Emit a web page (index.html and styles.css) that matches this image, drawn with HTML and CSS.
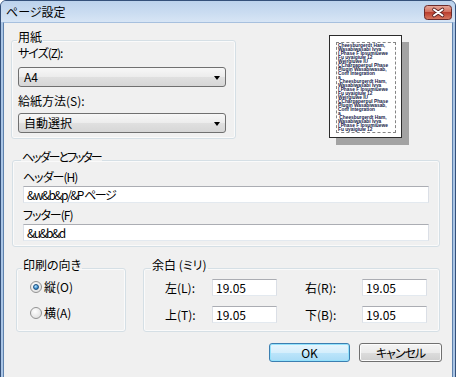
FILE: index.html
```html
<!DOCTYPE html>
<html lang="ja">
<head>
    <meta charset="UTF-8">
    <title>ページ設定</title>
    <link rel="stylesheet" href="styles.css">
</head>
<body>

<div class="window">
    <div class="titlebar">
        <span class="title">ページ設定</span>
        <span class="close">
            <svg width="28" height="15" viewBox="0 0 28 15">
                <defs>
                    <linearGradient id="cg" x1="0" y1="0" x2="0" y2="1">
                        <stop offset="0" stop-color="#e8aa9c"/>
                        <stop offset="0.45" stop-color="#d2705f"/>
                        <stop offset="0.5" stop-color="#bb3f2f"/>
                        <stop offset="1" stop-color="#d87a63"/>
                    </linearGradient>
                </defs>
                <rect x="0.5" y="0.5" width="27" height="14" rx="3" fill="url(#cg)" stroke="#6b2b2b"/>
                <path d="M10 4.5 L18.5 10.5 M18.5 4.5 L10 10.5" stroke="#5a2020" stroke-width="3.6" stroke-linecap="round"/>
                <path d="M10 4.5 L18.5 10.5 M18.5 4.5 L10 10.5" stroke="#ffffff" stroke-width="2" stroke-linecap="round"/>
            </svg>
        </span>
    </div>

    <div class="client">
        <div class="row-top">
            <fieldset class="group paper">
                <legend>用紙</legend>
                <div class="label first narrow">サイズ(Z):</div>
                <div class="combo"><span>A4</span><span class="arrow"></span></div>
                <div class="label second">給紙方法(S):</div>
                <div class="combo combo-source"><span>自動選択</span><span class="arrow"></span></div>
            </fieldset>

            <!-- page preview -->
            <div class="sheet">
                <div class="sheet-margin">
                    Cheesburgerdt Ham,<br>
                    Wasabiwasabi Ivya<br>
                    I Phase F Ipsumiuewe<br>
                    Fu uyaigiuw 12<br>
                    Weirgiuwe IU<br>
                    CCharpaperpul Phase<br>
                    Plugin Wasabiwasab,<br>
                    Conf Integration<br>
                    a<br>
                    &nbsp;Cheesburgerdt Ham,<br>
                    Wasabiwasabi Ivya<br>
                    I Phase F Ipsumiuewe<br>
                    Fu uyaigiuw 12<br>
                    Weirgiuwe IU<br>
                    CCharpaperpul Phase<br>
                    Plugin Wasabiwasab,<br>
                    Conf Integration<br>
                    a<br>
                    &nbsp;Cheesburgerdt Ham,<br>
                    Wasabiwasabi Ivya<br>
                    I Phase F Ipsumiuewe<br>
                    Fu uyaigiuw 12
                </div>
            </div>
        </div>

        <fieldset class="group hf">
            <legend class="kana">ヘッダーとフッター</legend>
            <div class="label hf-label narrow">ヘッダー(H)</div>
            <div class="textbox wide narrower">&amp;w&amp;b&amp;p/&amp;P ページ</div>
            <div class="label hf-label2 narrow">フッター(F)</div>
            <div class="textbox wide wide2 narrower">&amp;u&amp;b&amp;d</div>
        </fieldset>

        <div class="row-bottom">
            <fieldset class="group orient">
                <legend>印刷の向き</legend>
                <div class="radio-row"><span class="radio checked"></span><span>縦(O)</span></div>
                <div class="radio-row row2"><span class="radio"></span><span>横(A)</span></div>
            </fieldset>

            <fieldset class="group margins">
                <legend>余白 (ミリ)</legend>
                <div class="margin-grid">
                    <span class="mlabel">左(L):</span>
                    <div class="textbox small">19.05</div>
                    <span class="mlabel right">右(R):</span>
                    <div class="textbox small">19.05</div>
                    <span class="mlabel">上(T):</span>
                    <div class="textbox small">19.05</div>
                    <span class="mlabel right">下(B):</span>
                    <div class="textbox small">19.05</div>
                </div>
            </fieldset>
        </div>

        <div class="buttons">
            <div class="btn default">OK</div>
            <div class="btn cancel narrow">キャンセル</div>
        </div>
    </div>
</div>

</body>
</html>
```

FILE: styles.css
```css
body {
    margin: 0;
    width: 458px;
    height: 377px;
    overflow: hidden;
    background-color: #ffffff;
    font-family: "Noto Sans CJK JP", "Noto Sans", sans-serif;
    font-size: 12px;
    color: #000;
    font-feature-settings: "palt";
}

.narrow {
    letter-spacing: -1px;
}

.narrower {
    letter-spacing: -1.5px;
}

.window {
    width: 456px;
    height: 382px;
    box-sizing: border-box;
    border: 1px solid #34507a;
    border-radius: 6px 6px 0 0;
    background-color: #aac5e5;
    padding: 0 2px;
    overflow: hidden;
}

.titlebar {
    height: 21px;
    margin: 0 -2px;
    padding: 0 3px 0 5px;
    display: flex;
    align-items: center;
    justify-content: space-between;
    background: linear-gradient(#bcd2ec, #cadcf1 55%, #d7e5f5);
}

.title {
    line-height: 14px;
    margin-top: 1px;
}

.close {
    display: flex;
    margin-top: 1px;
}

.client {
    height: 350px;
    background-color: #f0f0f0;
    border: 1px solid #5f82ad;
    border-top-color: #a7c0de;
    padding-top: 11px;
    box-sizing: content-box;
}

/* group boxes */
.group {
    margin: 0;
    padding: 0 6px;
    min-width: 0;
    box-sizing: border-box;
    border: 1px solid #d5dfe5;
    border-radius: 3px;
    box-shadow: inset 0 0 0 1px #fafafa;
}

.group legend {
    position: relative;
    top: -3px;
    padding: 0 1px;
    margin-left: -1px;
    line-height: 12px;
}

.group legend.kana {
    letter-spacing: -2px;
}

.label {
    line-height: 12px;
}

.row-top {
    display: flex;
    align-items: flex-start;
}

.paper {
    width: 225px;
    margin-left: 7px;
    padding-bottom: 5px;
}

.paper .first {
    margin-top: 1px;
}

.paper .second {
    margin-top: 8px;
}

.combo {
    height: 20px;
    margin-top: 8px;
    width: 208px;
    box-sizing: border-box;
    border: 1px solid #707070;
    border-radius: 3px;
    background: linear-gradient(#f7f7f7, #ececec 50%, #e0e0e0 50%, #d6d6d6);
    display: flex;
    align-items: center;
    justify-content: space-between;
    padding: 0 5px 0 5px;
    line-height: 14px;
}

.combo-source {
    margin-top: 6px;
}

.arrow {
    width: 0;
    height: 0;
    border-top: 4px solid #000;
    border-left: 3.5px solid transparent;
    border-right: 3.5px solid transparent;
    margin-top: 1px;
}

/* page preview */
.sheet {
    width: 73px;
    height: 103px;
    box-sizing: border-box;
    margin-left: 93px;
    margin-top: 1px;
    background-color: #fff;
    border: 1px solid #2b2b2b;
    box-shadow: 7px 7px 0 #a3a3a3;
    padding: 6px 5px 4px 6px;
}

.sheet-margin {
    height: 100%;
    box-sizing: border-box;
    border: 1px dashed #858585;
    padding: 1px 1px 0 1px;
    overflow: hidden;
    white-space: nowrap;
    font-family: "Liberation Sans", sans-serif;
    font-size: 4.8px;
    line-height: 4px;
    font-weight: bold;
    color: #16224a;
    font-feature-settings: normal;
}

/* header and footer */
.hf {
    width: 428px;
    margin: 15px 0 0 8px;
    padding: 0 6px 5px 10px;
}

.hf legend {
    margin-left: -2px;
}

.hf-label {
    margin-top: 4px;
    line-height: 14px;
}

.hf-label2 {
    margin-top: 5px;
    line-height: 14px;
}

.textbox {
    height: 17px;
    box-sizing: border-box;
    background-color: #fff;
    border: 1px solid #dbdfe6;
    border-top-color: #abadb3;
    border-bottom-color: #e3e9ef;
    padding: 0 3px;
    line-height: 15px;
    white-space: nowrap;
}

.wide {
    width: 406px;
    margin-top: 2px;
}

.wide2 {
    margin-top: 2px;
}

/* orientation and margins */
.row-bottom {
    display: flex;
    margin-top: 15px;
}

.orient {
    width: 110px;
    margin-left: 12px;
    padding-bottom: 11px;
}

.radio-row {
    display: flex;
    align-items: center;
    height: 14px;
    margin-top: 6px;
    line-height: 14px;
}

.radio-row.row2 {
    margin-top: 12px;
}

.radio {
    width: 12px;
    height: 12px;
    box-sizing: border-box;
    margin: 0 2px 0 7px;
    border-radius: 50%;
    border: 1px solid #939393;
    background: radial-gradient(circle at 40% 35%, #ffffff, #e4e4e4 70%, #cfcfcf);
    position: relative;
}

.radio.checked::after {
    content: "";
    position: absolute;
    left: 2px;
    top: 2px;
    width: 6px;
    height: 6px;
    box-sizing: border-box;
    border-radius: 50%;
    border: 1px solid #1c5180;
    background: radial-gradient(circle at 40% 35%, #b7e3ff, #3d8fd0 60%, #1f5d94);
}

.margins {
    width: 297px;
    margin-left: 17px;
    padding: 0 6px 8px 8px;
}

.margin-grid {
    display: grid;
    grid-template-columns: 47px 65px 85px 65px;
    grid-auto-rows: 17px;
    row-gap: 10px;
    margin: 5px 0 0 13px;
    align-items: center;
}

.mlabel {
    line-height: 14px;
}

.mlabel.right {
    padding-left: 28px;
}

.small {
    width: 65px;
}

/* buttons */
.buttons {
    display: flex;
    justify-content: flex-end;
    gap: 9px;
    margin-top: 11px;
    padding-right: 10px;
}

.btn {
    height: 19px;
    box-sizing: border-box;
    border-radius: 3px;
    display: flex;
    align-items: center;
    justify-content: center;
    line-height: 14px;
}

.btn.default {
    width: 81px;
    border: 1px solid #3c7fb1;
    background: linear-gradient(#e8f6fd, #d5eefc 50%, #bde5fb 50%, #a9dbf6);
    box-shadow: inset 0 0 0 1px #94e2fc;
}

.btn.cancel {
    width: 83px;
    border: 1px solid #707070;
    background: linear-gradient(#f4f4f4, #ebebeb 50%, #dddddd 50%, #cfcfcf);
    box-shadow: inset 0 0 0 1px #fcfcfc;
}
```
